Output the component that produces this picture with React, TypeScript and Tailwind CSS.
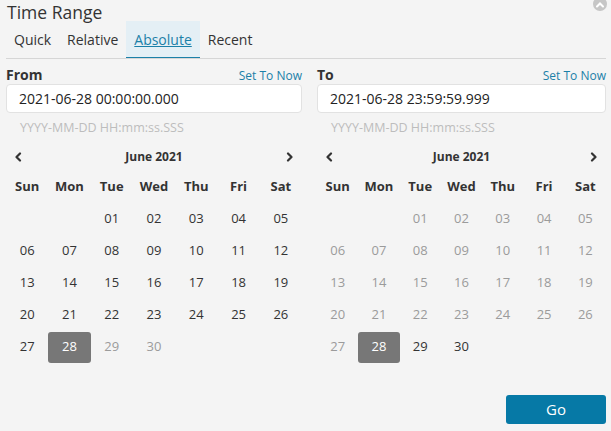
import React from "react";

const WEEKDAYS = ["Sun", "Mon", "Tue", "Wed", "Thu", "Fri", "Sat"];

// June 2021 starts on a Tuesday
const DAYS: (number | null)[] = [null, null, ...Array.from({ length: 30 }, (_, i) => i + 1)];

function Chevron({ dir }: { dir: "left" | "right" }) {
  return (
    <svg width="8" height="10" viewBox="0 0 8 10" className="text-[#333]">
      <path
        d={dir === "left" ? "M6 1.5 L2.5 5 L6 8.5" : "M2 1.5 L5.5 5 L2 8.5"}
        fill="none"
        stroke="currentColor"
        strokeWidth="2.2"
        strokeLinecap="round"
        strokeLinejoin="round"
      />
    </svg>
  );
}

function Calendar({ muted }: { muted: (d: number) => boolean }) {
  return (
    <div>
      <div className="flex items-center justify-between h-[28px] px-2">
        <Chevron dir="left" />
        <span className="text-[12px] font-bold text-[#333]">June 2021</span>
        <Chevron dir="right" />
      </div>
      <div className="grid grid-cols-7">
        {WEEKDAYS.map((w) => (
          <div
            key={w}
            className="h-[32px] flex items-center justify-center text-[13px] font-bold text-[#333]"
          >
            {w}
          </div>
        ))}
        {DAYS.map((d, i) => (
          <div key={i} className="h-[32px] flex items-center justify-center">
            {d !== null && (
              <span
                className={`w-full h-[31px] flex items-center justify-center text-[13px] rounded-[3px] ${
                  d === 28
                    ? "bg-[#777] text-white"
                    : muted(d)
                      ? "text-[#9b9b9b]"
                      : "text-[#333]"
                }`}
              >
                {String(d).padStart(2, "0")}
              </span>
            )}
          </div>
        ))}
      </div>
    </div>
  );
}

function DatePanel({
  label,
  value,
  muted,
  className,
}: {
  label: string;
  value: string;
  muted: (d: number) => boolean;
  className: string;
}) {
  return (
    <div className={className}>
      <div className="flex items-end justify-between h-[22px] pb-[2px]">
        <span className="text-[14px] font-bold text-[#333] leading-none">{label}</span>
        <span className="text-[12px] text-[#1b80a8] leading-none">Set To Now</span>
      </div>
      <div className="h-[29px] bg-white border border-[#e2e2e2] rounded-[4px] flex items-center px-[12px] text-[14px] text-[#222]">
        {value}
      </div>
      <div className="h-[30px] flex items-center pl-[14px] text-[12.5px] text-[#bdbdbd]">
        YYYY-MM-DD HH:mm:ss.SSS
      </div>
      <Calendar muted={muted} />
    </div>
  );
}

export default function App() {
  return (
    <div className="relative w-[611px] h-[431px] overflow-hidden bg-[#f4f4f4] font-['Open_Sans',sans-serif]">
      <div className="absolute right-[4px] top-[-3px] size-[14px] rounded-full bg-[#c6c6c6] flex items-center justify-center">
        <svg width="8" height="6" viewBox="0 0 8 6" className="mt-[2px]">
          <path d="M1 4.5 L4 1.5 L7 4.5" fill="none" stroke="white" strokeWidth="2" strokeLinecap="round" />
        </svg>
      </div>

      <div className="px-[7px] h-[21px] text-[17.5px] leading-[24px] text-[#333]">Time Range</div>

      <div className="mx-[6px] mr-[5px] flex border-b border-[#d6d6d6] h-[38px]">
        {["Quick", "Relative", "Absolute", "Recent"].map((t) => (
          <div
            key={t}
            className={`px-[8px] flex items-center text-[14px] ${
              t === "Absolute"
                ? "bg-[#e4eff5] text-[#1b80a8] underline border-b border-[#1b80a8]"
                : "text-[#333]"
            }`}
          >
            {t}
          </div>
        ))}
      </div>

      <div className="flex gap-[15px] pl-[6px] pr-[5px] pt-[3px]">
        <DatePanel
          className="w-[296px]"
          label="From"
          value="2021-06-28 00:00:00.000"
          muted={(d) => d > 28}
        />
        <DatePanel
          className="flex-1"
          label="To"
          value="2021-06-28 23:59:59.999"
          muted={(d) => d < 28}
        />
      </div>

      <div className="flex justify-end pr-[5px] mt-[32px]">
        <button className="w-[100px] h-[29px] bg-[#0679a6] rounded-[3px] text-white text-[15px]">
          Go
        </button>
      </div>
    </div>
  );
}
